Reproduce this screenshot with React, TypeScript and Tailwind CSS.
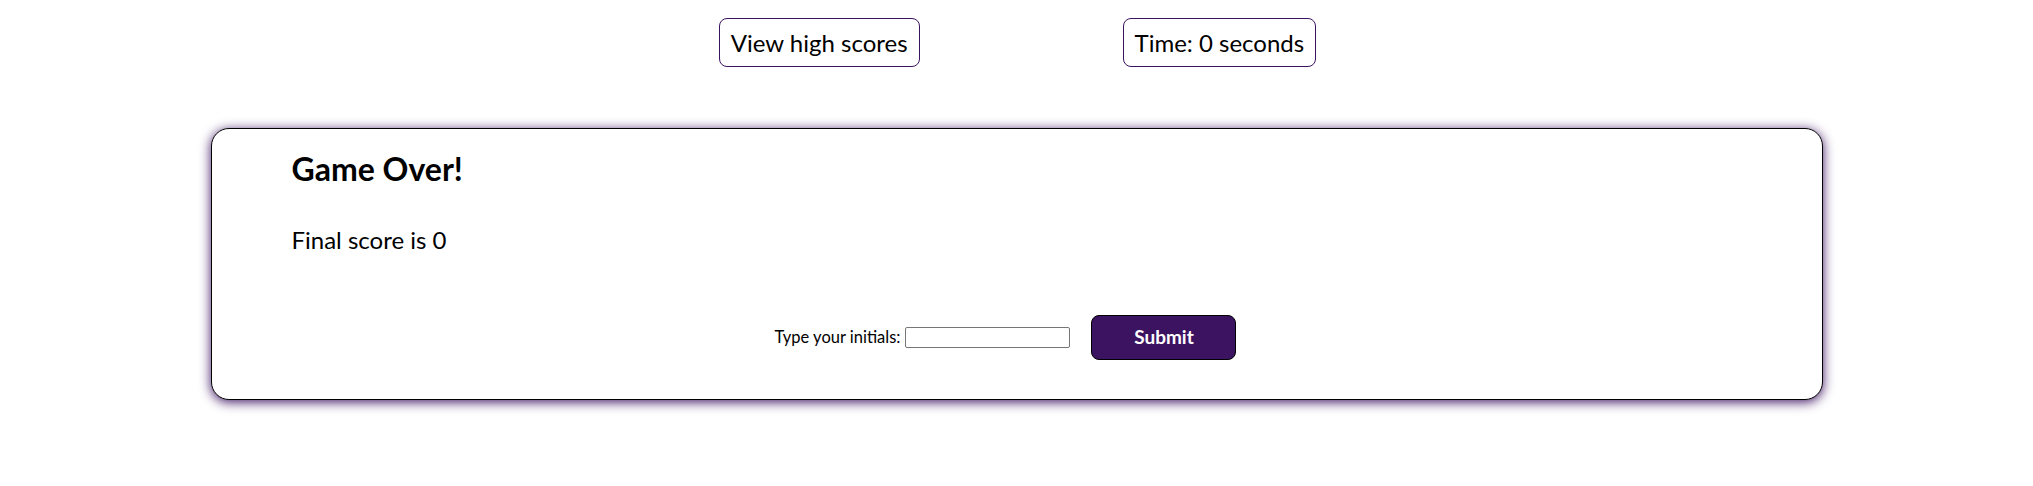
import React from "react";

export default function App() {
  const font = { fontFamily: '"Lato", "Open Sans", sans-serif' };
  return (
    <div className="w-[2033px] h-[486px] bg-white text-black" style={font}>
      <div className="flex items-start justify-center gap-[203px] pt-[18px] pl-[2px]">
        <div className="h-[49px] px-[11px] flex items-center justify-center border border-[#3c1361] rounded-[8px] text-[24px] whitespace-nowrap">
          View high scores
        </div>
        <div className="h-[49px] px-[11px] flex items-center justify-center border border-[#3c1361] rounded-[8px] text-[24px] whitespace-nowrap">
          Time: 0 seconds
        </div>
      </div>
      <div className="mt-[61px] mx-auto w-[1612px] h-[272px] border border-black rounded-[18px] bg-white shadow-[0_2px_12px_#3c1361] flex flex-col">
        <div className="pl-[80px] pt-[20px]">
          <h1 className="text-[32px] font-bold leading-[40px]">Game Over!</h1>
          <p className="mt-[36px] text-[24px] leading-[30px]">Final score is 0</p>
        </div>
        <div className="mt-[60px] flex items-center justify-center pr-[22px]">
          <label className="text-[16.5px] mr-[5px]">Type your initials:</label>
          <input className="w-[165px] h-[21px] border border-[#767676] rounded-[2px] bg-white" />
          <button className="ml-[21px] w-[145px] h-[45px] bg-[#3c1361] border border-black rounded-[8px] text-white font-bold text-[19px]">
            Submit
          </button>
        </div>
      </div>
    </div>
  );
}
